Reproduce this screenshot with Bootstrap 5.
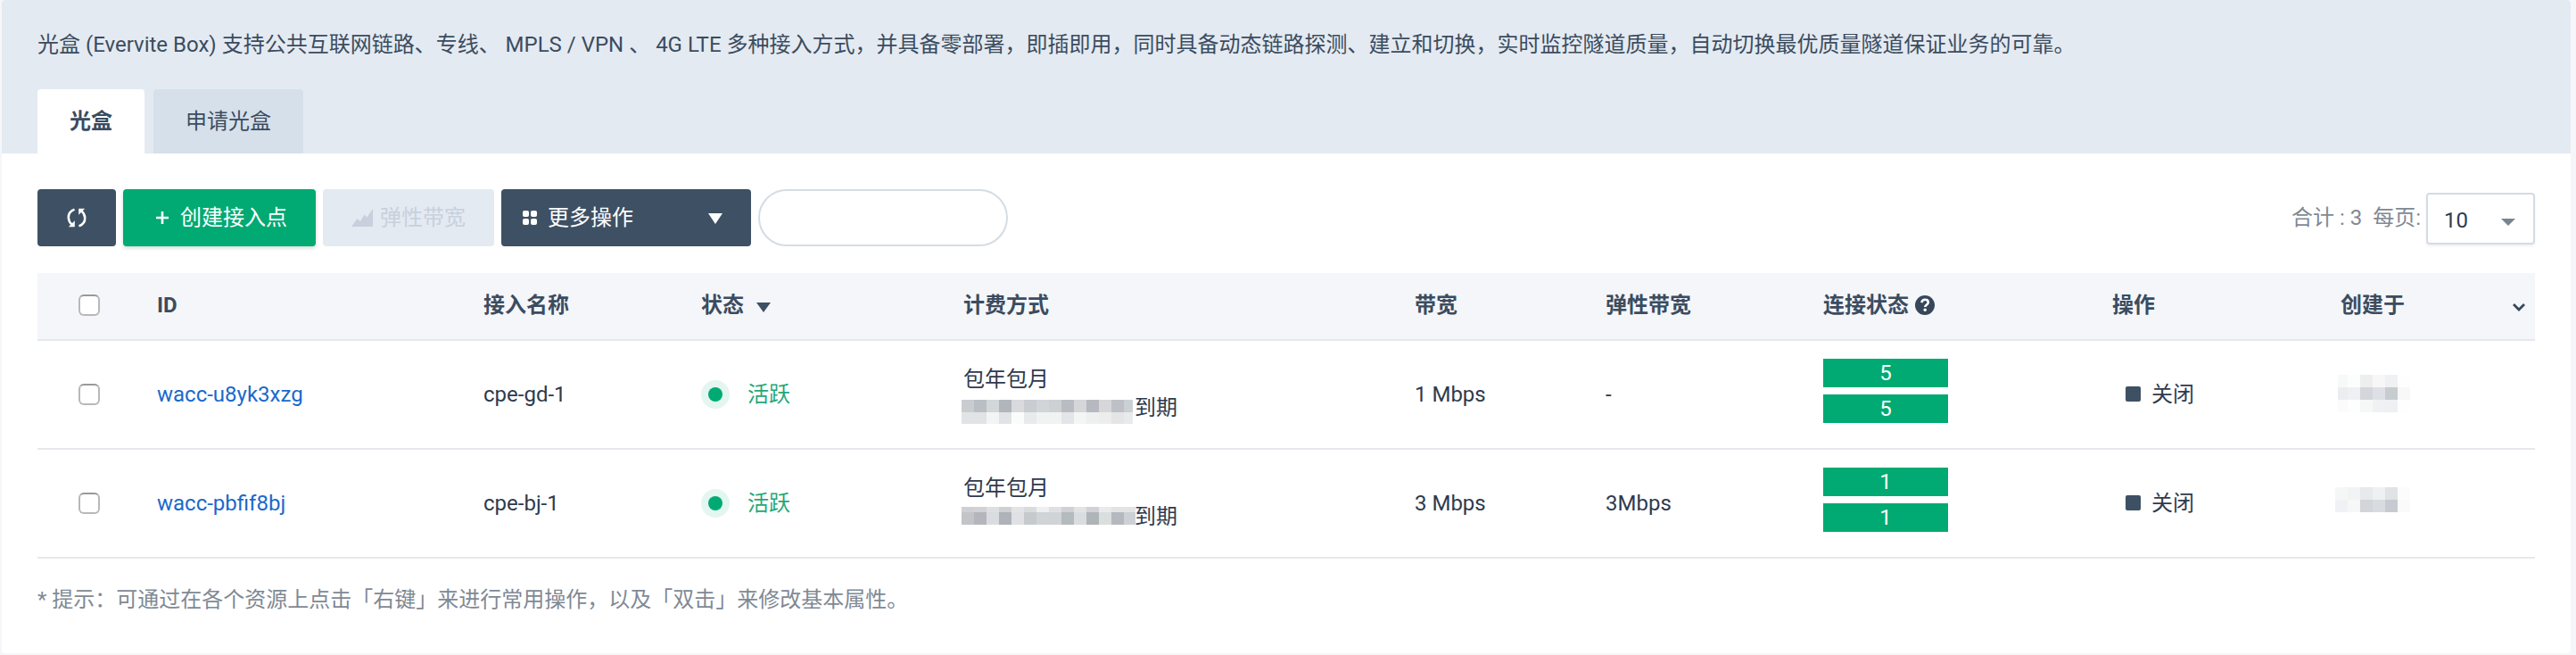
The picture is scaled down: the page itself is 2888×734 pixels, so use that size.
<!DOCTYPE html>
<html lang="zh-CN">
<head>
<meta charset="utf-8">
<meta name="viewport" content="width=device-width, initial-scale=1">
<title>光盒</title>
<link rel="stylesheet" href="https://cdn.jsdelivr.net/npm/bootstrap@5.3.0/dist/css/bootstrap.min.css">
<style>
body{background:#f5f6fa;font-family:Roboto,"Noto Sans CJK SC",sans-serif;font-size:24px;line-height:32px;color:#2f3a4d}
.panel{width:2880px;height:732px;margin-left:2px;background:#fff;border-radius:4px;overflow:hidden}
.panel-top{height:172px;background:#e4eaf1;color:#3b4c60;padding:34px 40px 0}
.panel-top p{height:32px;margin-bottom:34px}
.tabs{gap:10px}
.tabs .nav-link{height:72px;padding:20px 36px;line-height:32px;border-radius:4px 4px 0 0;background:#d6e0ea;color:#3b4c60}
.tabs .nav-link.active{background:#fff;font-weight:700}
.tool-row{padding:40px 40px 0;height:134px}
.tool{height:64px;padding:0;border:0;border-radius:4px;font-size:24px;line-height:32px;color:#fff;display:flex;align-items:center}
.tool-dark,.tool-dark:hover{background:#3e5063;color:#fff}
.tool-green,.tool-green:hover{background:#00aa72;color:#fff;box-shadow:0 2px 4px rgba(0,80,60,.2)}
.tool-off,.tool-off:disabled{background:#e4eaf1;color:#c8d0dd;opacity:1;border:0}
.search{width:280px;height:64px;border:2px solid #d5dce4;border-radius:32px;box-shadow:none}
.pager{color:#7f8994;white-space:pre}
.page-size{width:122px;height:58px;border:2px solid #d3dbe4;border-radius:4px;color:#2f3d50;padding:3px 20px 0 18px;margin:4px 0 0 6px;box-shadow:0 2px 3px rgba(60,80,100,.08)}
.grid{width:2800px;margin:0 40px;table-layout:fixed;border-collapse:separate;border-spacing:0}
.grid th,.grid td{padding:0;vertical-align:top;border-bottom:2px solid #e5e9ed}
.grid th{height:76px;background:#f5f6fa;color:#3b4c60;font-weight:700;padding-top:20px}
.grid td{height:122px;padding-top:44px}
.grid td.tight{padding-top:20px}
.grid td.bill{padding-top:27px}
.grid a{color:#1a69cc;text-decoration:none}
.grid .form-check-input{display:block;width:24px;height:24px;margin:4px 0 0 46px;border:2px solid #b8b8b8;border-top-color:#999;border-radius:6px;background:#fff}
.dot{width:32px;height:32px;border-radius:50%;background:#e3f6ef;margin-right:20px}
.dot::after{content:"";width:16px;height:16px;border-radius:50%;background:#00aa72}
.live{color:#1fa877}
.count{width:140px;height:32px;line-height:32px;background:#00aa72;color:#fff;text-align:center;margin-bottom:8px}
.stop-mark{width:17px;height:17px;border-radius:2px;background:#3e5063;margin:-2px 12px 0 15px}
.mosaic{display:block;shape-rendering:crispEdges;flex:none}
.hint{margin:30px 40px 0;color:#7f8994}
</style>
</head>
<body>
<main class="panel">
  <header class="panel-top">
    <p class="text-nowrap">光盒 (Evervite Box) 支持公共互联网链路、专线、 MPLS / VPN 、 4G LTE 多种接入方式，并具备零部署，即插即用，同时具备动态链路探测、建立和切换，实时监控隧道质量，自动切换最优质量隧道保证业务的可靠。</p>
    <nav class="nav tabs">
      <a class="nav-link active" href="#">光盒</a>
      <a class="nav-link" href="#">申请光盒</a>
    </nav>
  </header>

  <section class="tool-row d-flex justify-content-between align-items-start">
    <div class="d-flex gap-2">
      <button class="btn tool tool-dark justify-content-center" style="width:88px" aria-label="刷新">
        <svg width="22" height="22" viewBox="0 0 22 22" fill="none" stroke="#fff" stroke-width="2.6"><path d="M8.5 1.6C3.6 3.5 1.6 7.2 1.8 11c.1 3 1.5 5.500 3.800 7.600M13.500 20.400c4.900-1.900 6.900-5.600 6.700-9.400-.1-3-1.500-5.500-3.800-7.600"/><path d="M1.800 21.200h7v-7zM20.200.800h-7v7z" fill="#fff" stroke="none"/></svg>
      </button>
      <button class="btn tool tool-green" style="width:216px">
        <svg width="14" height="14" viewBox="0 0 14 14" style="margin:0 13px 0 37px"><path d="M7 0v14M0 7h14" stroke="#fff" stroke-width="2.6"/></svg>创建接入点
      </button>
      <button class="btn tool tool-off" disabled style="width:192px">
        <svg width="24" height="20" viewBox="0 0 24 20" fill="#c8d0dd" style="margin:0 8px 0 32px"><path d="M0 20 6.500 11l3.500 3 4.500-7.500 3 3L24 0v20z"/></svg>弹性带宽
      </button>
      <button class="btn tool tool-dark" style="width:280px">
        <svg width="16" height="16" viewBox="0 0 16 16" fill="#fff" style="margin:0 12px 0 24px"><rect width="7" height="7" rx="2"/><rect x="9" width="7" height="7" rx="2"/><rect y="9" width="7" height="7" rx="2"/><rect x="9" y="9" width="7" height="7" rx="2"/></svg>更多操作
        <svg class="ms-auto" width="16" height="12" viewBox="0 0 16 12" fill="#fff" style="margin:2px 32px 0 0"><path d="M0 0h16L8 12z"/></svg>
      </button>
      <input class="form-control search" type="text" aria-label="搜索">
    </div>
    <div class="d-flex align-items-start pager">
      <div class="pt-3">合计 : 3  每页:</div>
      <div class="page-size d-flex align-items-center justify-content-between">10<svg width="16" height="8" viewBox="0 0 16 8" fill="#79858f" style="margin-top:4px"><path d="M0 0h16L8 8z"/></svg></div>
    </div>
  </section>

  <table class="grid">
    <colgroup>
      <col style="width:134px"><col style="width:366px"><col style="width:244px"><col style="width:294px"><col style="width:506px"><col style="width:214px"><col style="width:244px"><col style="width:324px"><col style="width:256px"><col>
    </colgroup>
    <thead>
      <tr>
        <th><input class="form-check-input" type="checkbox" aria-label="全选"></th>
        <th>ID</th>
        <th>接入名称</th>
        <th>状态<svg width="16" height="11" viewBox="0 0 16 11" fill="#3e5063" style="margin:0 0 0 14px;vertical-align:0"><path d="M0 0h16L8 11z"/></svg></th>
        <th>计费方式</th>
        <th>带宽</th>
        <th>弹性带宽</th>
        <th><div class="d-flex align-items-center">连接状态<svg width="22" height="22" viewBox="0 0 22 22" style="margin-left:7px"><circle cx="11" cy="11" r="11" fill="#36475b"/><path d="M7.500 8.200C7.700 5.900 9.200 4.800 11.200 4.800c2.100 0 3.600 1.200 3.600 3 0 2.600-3.500 2.700-3.500 5.200" fill="none" stroke="#fff" stroke-width="2.600"/><circle cx="11.200" cy="16.300" r="1.700" fill="#fff"/></svg></div></th>
        <th>操作</th>
        <th><div class="d-flex align-items-center justify-content-between">创建于<svg width="14" height="9" viewBox="0 0 14 9" fill="none" stroke="#36475b" stroke-width="2.800" style="margin:4px 11px 0 0"><path d="m1 1 6 6 6-6"/></svg></div></th>
      </tr>
    </thead>
    <tbody>
      <tr>
        <td><input class="form-check-input" type="checkbox" aria-label="选择"></td>
        <td><a href="#">wacc-u8yk3xzg</a></td>
        <td>cpe-gd-1</td>
        <td><div class="d-flex live"><span class="dot d-flex align-items-center justify-content-center"></span>活跃</div></td>
        <td class="bill">包年包月
          <div class="d-flex"><svg class="mosaic" data-cells="c9cdd0 b9bfc3 d3d7da b0b6ba d9dade c9ccd0 d1d5d8 cdd1d4 b9bdc3 d5d6da b7b9c0 d7d7da bdc0c7 cbd0d4|e2e3e5 e2e3e5 f3f5f4 e2e3e6 fafcfb e9eaec f1f3f2 f1f3f2 e4e5e8 f4f6f5 eeefef ecedec e4e5e5 e9eaec" data-x="14" data-rows="14 13" width="192" height="27" style="margin:7px 2px 0 -2px"></svg>到期</div></td>
        <td>1 Mbps</td>
        <td>-</td>
        <td class="tight"><div class="count">5</div><div class="count">5</div></td>
        <td><div class="d-flex align-items-center"><span class="stop-mark"></span>关闭</div></td>
        <td><svg class="mosaic" data-cells="f7f9f9 fbfefd eeeeef f7f7f7 f0f1f3 fefefe|ecedf0 eff0f3 d3d7db dde1e5 c7ccd0 f8f8f9|fbfbfb fdfffe f6f8f7 f0f1f4 eff0f3 fefefe" data-x="14" data-first="11" data-rows="14 14 14" width="81" height="42" style="margin:-6px 0 0 -3px"></svg></td>
      </tr>
      <tr>
        <td><input class="form-check-input" type="checkbox" aria-label="选择"></td>
        <td><a href="#">wacc-pbfif8bj</a></td>
        <td>cpe-bj-1</td>
        <td><div class="d-flex live"><span class="dot d-flex align-items-center justify-content-center"></span>活跃</div></td>
        <td class="bill">包年包月
          <div class="d-flex"><svg class="mosaic" data-cells="cfd0d4 d1d2d5 dedfe1 cfd0d3 e4e4e7 d9dbdd eeeff0 dfe0e2 cfd1d4 e2e3e5 d0d2d5 e9ebea e2e4e3 e2e4e3|c2c4c8 b4b6bc d9dde0 adb3b8 e0e1e4 c7cacd d1d4d7 d1d4d7 b4babd d9dde0 aeb4b8 dadede b6b8c0 cdd0d4" data-x="14" data-rows="6 14" width="195" height="20" style="margin:5px -1px 0 -2px"></svg>到期</div></td>
        <td>3 Mbps</td>
        <td>3Mbps</td>
        <td class="tight"><div class="count">1</div><div class="count">1</div></td>
        <td><div class="d-flex align-items-center"><span class="stop-mark"></span>关闭</div></td>
        <td><svg class="mosaic" data-cells="f5f7f6 f2f3f5 e8e9eb eff0f2 dfe3e4 fcfcfc|f0f1f4 f6f8f7 d2d6da d8dce0 c7cad0 fafafb" data-x="14" data-rows="14 14" width="84" height="28" style="margin:-2px 0 0 -6px"></svg></td>
      </tr>
    </tbody>
  </table>
  <p class="hint">* 提示：可通过在各个资源上点击「右键」来进行常用操作，以及「双击」来修改基本属性。</p>
</main>
<script src="https://cdn.jsdelivr.net/npm/bootstrap@5.3.0/dist/js/bootstrap.bundle.min.js"></script>
<script>
// Fill each masked value with its tiles; the last tile takes up the remaining width.
document.querySelectorAll('.mosaic').forEach(function (svg) {
  var heights = svg.dataset.rows.split(' ').map(Number), y = 0, total = +svg.getAttribute('width');
  svg.dataset.cells.split('|').forEach(function (row, r) {
    var x = 0, cells = row.split(' ');
    cells.forEach(function (c, i) {
      var w = i === 0 && svg.dataset.first ? +svg.dataset.first : +svg.dataset.x;
      if (i === cells.length - 1) w = total - x;
      var t = document.createElementNS('http://www.w3.org/2000/svg', 'rect');
      t.setAttribute('x', x); t.setAttribute('y', y);
      t.setAttribute('width', w); t.setAttribute('height', heights[r]);
      t.setAttribute('fill', '#' + c);
      svg.appendChild(t);
      x += w;
    });
    y += heights[r];
  });
});
</script>
</body>
</html>
